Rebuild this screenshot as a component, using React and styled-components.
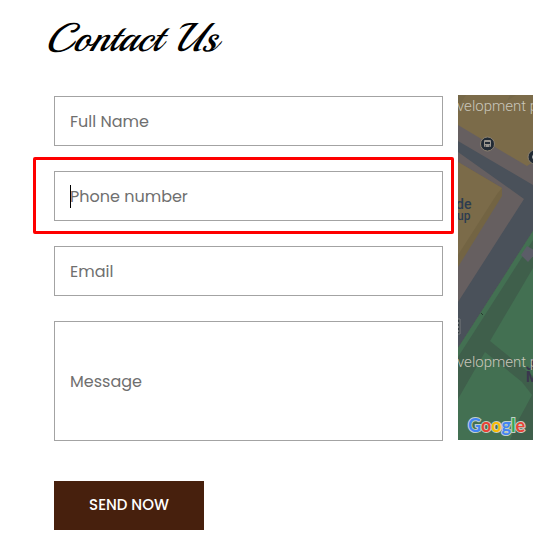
import React from "react";
import styled, { createGlobalStyle } from "styled-components";

const GlobalStyle = createGlobalStyle`
  *, *::before, *::after { box-sizing: border-box; }
  body { margin: 0; background: #fff; font-family: Poppins, Inter, sans-serif; }
`;

const Page = styled.main`
  padding: 10px 0 22px 54px;
`;

const Title = styled.h1`
  margin: 0 0 29px -9px;
  color: #000;
  font: italic 400 40px/56px Playball, "Liberation Serif", cursive;
`;

const Columns = styled.div`
  display: grid;
  grid-template-columns: minmax(0, 389fr) minmax(0, 75fr);
  column-gap: 15px;
  align-items: start;
`;

const Form = styled.form`
  display: flex;
  flex-direction: column;
  align-items: stretch;
  gap: 25px;
  padding-top: 1px;
`;

const Field = styled.label`
  position: relative;
  display: block;
`;

const Input = styled.input`
  display: block;
  width: 100%;
  height: ${({ $tall }) => ($tall ? "120px" : "50px")};
  padding: 0 15px;
  border: 1px solid #a3a3a3;
  border-radius: 0;
  outline: none;
  background: #fff;
  color: #222;
  font: 400 16px/24px Poppins, Inter, sans-serif;
  &::placeholder { color: #6f6f6f; opacity: 1; }
`;

const Highlight = styled.span`
  position: absolute;
  inset: -14px -11px -13px -21px;
  border: 3px solid #fe0000;
  border-radius: 2px;
  pointer-events: none;
`;

const Caret = styled.span`
  position: absolute;
  left: 16px;
  top: 14px;
  width: 1px;
  height: 23px;
  background: #000;
  pointer-events: none;
`;

const SendButton = styled.button`
  align-self: flex-start;
  min-width: 150px;
  margin-top: 15px;
  padding: 12px 20px 13px;
  border: 0;
  background: #47200d;
  color: #fff;
  font: 500 15px/24px Poppins, Inter, sans-serif;
  white-space: nowrap;
`;

const MapView = styled.svg`
  display: block;
  width: 100%;
  height: 345px;
  font-family: Roboto, sans-serif;
`;

const fields = [
  { name: "fullName", label: "Full Name", type: "text" },
  { name: "phone", label: "Phone number", type: "tel", active: true },
  { name: "email", label: "Email", type: "email" },
  { name: "message", label: "Message", type: "text", tall: true },
];

function LocationMap() {
  return (
    <MapView viewBox="0 0 75 345" preserveAspectRatio="xMinYMin slice" role="img" aria-label="Location map">
      <rect width="75" height="345" fill="#665f60" />
      <path d="M0 0H75V67L69 71L0 30Z" fill="#7b6b49" />
      <path d="M0 0H8L0 12ZM52 0H58L49 6Z" fill="#756747" />
      <path d="M0 67L44 93V101L0 172Z" fill="#736443" />
      <path d="M0 67L44 93L39 99L0 160Z" fill="#7b6b49" />
      <path d="M0 46L75 90V136L0 253V207L66 104L0 57Z" fill="#4a515a" />
      <path d="M75 136V345H0V253Z" fill="#3f5f4b" />
      <path d="M75 136L0 253V262L75 145Z" fill="#437052" />
      <path d="M75 173V281L32 246Z" fill="#437052" />
      <path d="M27 257L64 287L74 300L60 326L52 345H0V304Z" fill="#437052" />
      <path d="M63 160L69 151L76 155V160L70 167Z" fill="#5b5d68" />
      <g fill="#2c3c50" fontWeight="500">
        <text x="-2" y="114" fontSize="14">de</text>
        <text x="-1" y="125" fontSize="12">up</text>
      </g>
      <circle cx="29.5" cy="49" r="7" fill="#222b35" stroke="#8b8171" />
      <rect x="26" y="45" width="7" height="7" rx="1" fill="#99958e" />
      <path d="M27 47H32V49H27Z" fill="#222b35" />
      <path d="M27 51H28M31 51H32M27 53V52M32 53V52" stroke="#222b35" />
      <circle cx="77" cy="62" r="7" fill="#222b35" stroke="#8b8171" />
      <path d="M76 58Q73 62 76 66" fill="none" stroke="#bbb" />
      <path d="M0 224H2V239H0" fill="#323a40" stroke="#777b7c" />
      <path d="M0 228H1M0 232H1M0 236H1" stroke="#a5a7a8" />
      <path d="M23 218L25 220" stroke="#26392d" />
      <g fill="#3a374d" fontSize="14" fontWeight="700">
        <text x="68" y="275">J</text>
        <text x="68" y="287">M</text>
      </g>
      <g fill="#c9c6bb" fontSize="15" fontWeight="300">
        <text x="-1" y="16">velopment p</text>
        <text x="-1" y="272">velopment p</text>
      </g>
      <text x="10" y="337" fontFamily="Lato, sans-serif" fontSize="18" fontWeight="700" stroke="#c3cfc6" strokeWidth="2" paintOrder="stroke">
        <tspan fill="#4285f4">G</tspan><tspan fill="#ea4335">o</tspan><tspan fill="#fbbc04">o</tspan><tspan fill="#4285f4">g</tspan><tspan fill="#34a853">l</tspan><tspan fill="#ea4335">e</tspan>
      </text>
    </MapView>
  );
}

export default function App() {
  return (
    <>
      <GlobalStyle />
      <Page>
        <Title>Contact Us</Title>
        <Columns>
          <Form onSubmit={(event) => event.preventDefault()}>
            {fields.map(({ name, label, type, tall, active }) => (
              <Field key={name}>
                <Input name={name} type={type} placeholder={label} aria-label={label} $tall={tall} />
                {active && <Caret />}
                {active && <Highlight />}
              </Field>
            ))}
            <SendButton type="submit">SEND NOW</SendButton>
          </Form>
          <LocationMap />
        </Columns>
      </Page>
    </>
  );
}
